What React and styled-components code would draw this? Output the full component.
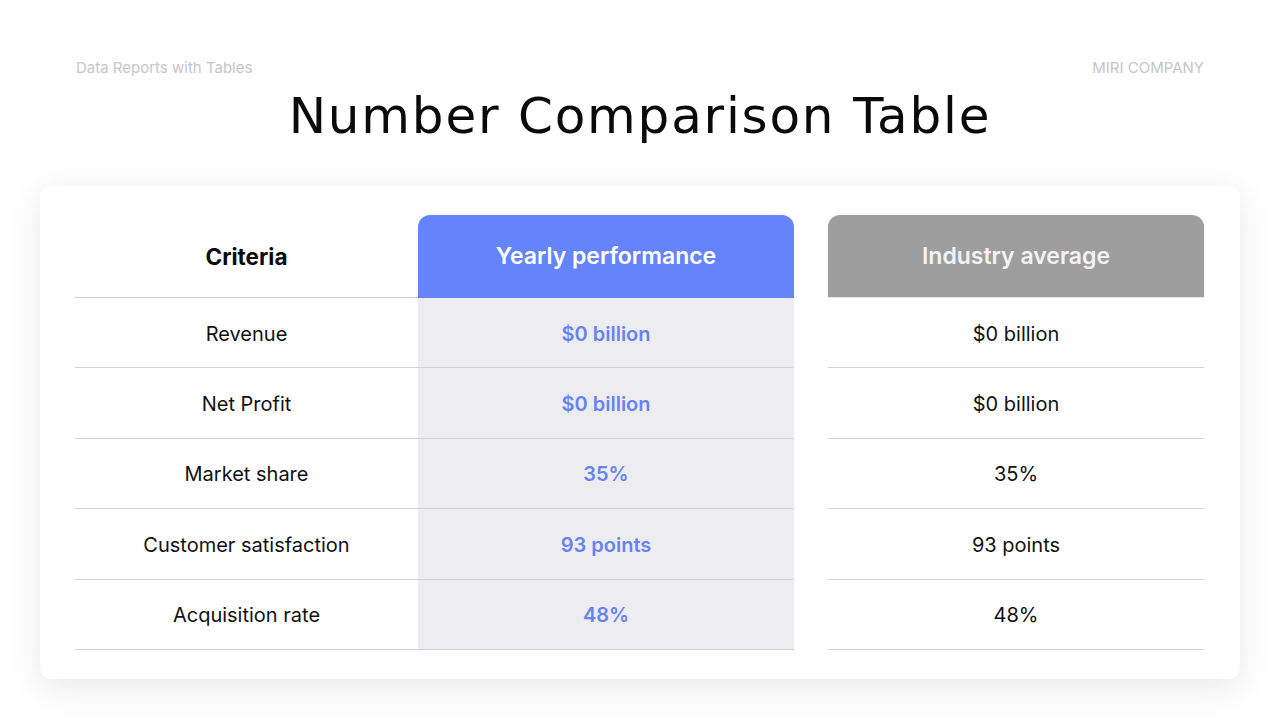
import React from "react";
import styled, { createGlobalStyle } from "styled-components";

const GlobalStyle = createGlobalStyle`
  html, body {
    margin: 0;
    padding: 0;
    background: #fff;
  }
  body {
    font-family: Inter, "Noto Sans", sans-serif;
    color: #111;
  }
`;

const Page = styled.div`
  width: 1280px;
  height: 720px;
  box-sizing: border-box;
  padding: 58px 40px 0;
  display: flex;
  flex-direction: column;
  overflow: hidden;
`;

const TopBar = styled.div`
  display: flex;
  justify-content: space-between;
  padding: 0 36px;
  font-size: 15px;
  line-height: 20px;
  color: #c6c6c6;
`;

const Title = styled.h1`
  margin: 6px 0 0;
  text-align: center;
  font-family: "DejaVu Sans", "Noto Sans", sans-serif;
  font-weight: 400;
  font-size: 50px;
  line-height: 64px;
  letter-spacing: 1.8px;
  color: #0a0a0a;
`;

const Card = styled.div`
  margin-top: 38px;
  background: #fff;
  border-radius: 12px;
  box-shadow: 0 8px 36px rgba(40, 40, 60, 0.1);
  padding: 29px 36px 29px 35px;
  display: flex;
`;

const Column = styled.div`
  display: flex;
  flex-direction: column;
  width: ${({ $width }) => $width}px;
  margin-left: ${({ $gap }) => $gap || 0}px;
`;

const HeadCell = styled.div`
  height: 82px;
  display: flex;
  align-items: center;
  justify-content: center;
  font-size: ${({ $bg }) => ($bg ? "23px" : "22.5px")};
  font-weight: ${({ $bg }) => ($bg ? 600 : 700)};
  border-radius: 12px 12px 0 0;
  border-bottom: 1px solid ${({ $line }) => $line || "#cfcfcf"};
  background: ${({ $bg }) => $bg || "transparent"};
  color: ${({ $color }) => $color || "#0a0a0a"};
`;

const BodyCell = styled.div`
  height: 70.4px;
  padding-top: 2px;
  box-sizing: border-box;
  display: flex;
  align-items: center;
  justify-content: center;
  font-size: 20px;
  border-bottom: 1px solid #d2d2d6;
  background: ${({ $highlight }) => ($highlight ? "#edecf0" : "transparent")};
  color: ${({ $highlight }) => ($highlight ? "#6684f0" : "#111")};
  font-weight: ${({ $highlight }) => ($highlight ? 600 : 400)};
`;

const rows = [
  { label: "Revenue", ours: "$0 billion", avg: "$0 billion" },
  { label: "Net Profit", ours: "$0 billion", avg: "$0 billion" },
  { label: "Market share", ours: "35%", avg: "35%" },
  { label: "Customer satisfaction", ours: "93 points", avg: "93 points" },
  { label: "Acquisition rate", ours: "48%", avg: "48%" },
];

export default function App() {
  return (
    <>
      <GlobalStyle />
      <Page>
        <TopBar>
          <span>Data Reports with Tables</span>
          <span>MIRI COMPANY</span>
        </TopBar>
        <Title>Number Comparison Table</Title>
        <Card>
          <Column $width={343}>
            <HeadCell>Criteria</HeadCell>
            {rows.map((r) => (
              <BodyCell key={r.label}>{r.label}</BodyCell>
            ))}
          </Column>
          <Column $width={376}>
            <HeadCell $bg="#6584f9" $color="#fff" $line="#6584f9">
              Yearly performance
            </HeadCell>
            {rows.map((r) => (
              <BodyCell key={r.label} $highlight>
                {r.ours}
              </BodyCell>
            ))}
          </Column>
          <Column $width={376} $gap={34}>
            <HeadCell $bg="#9e9e9f" $color="#f3f3f3" $line="#e4e4e6">
              Industry average
            </HeadCell>
            {rows.map((r) => (
              <BodyCell key={r.label}>{r.avg}</BodyCell>
            ))}
          </Column>
        </Card>
      </Page>
    </>
  );
}
